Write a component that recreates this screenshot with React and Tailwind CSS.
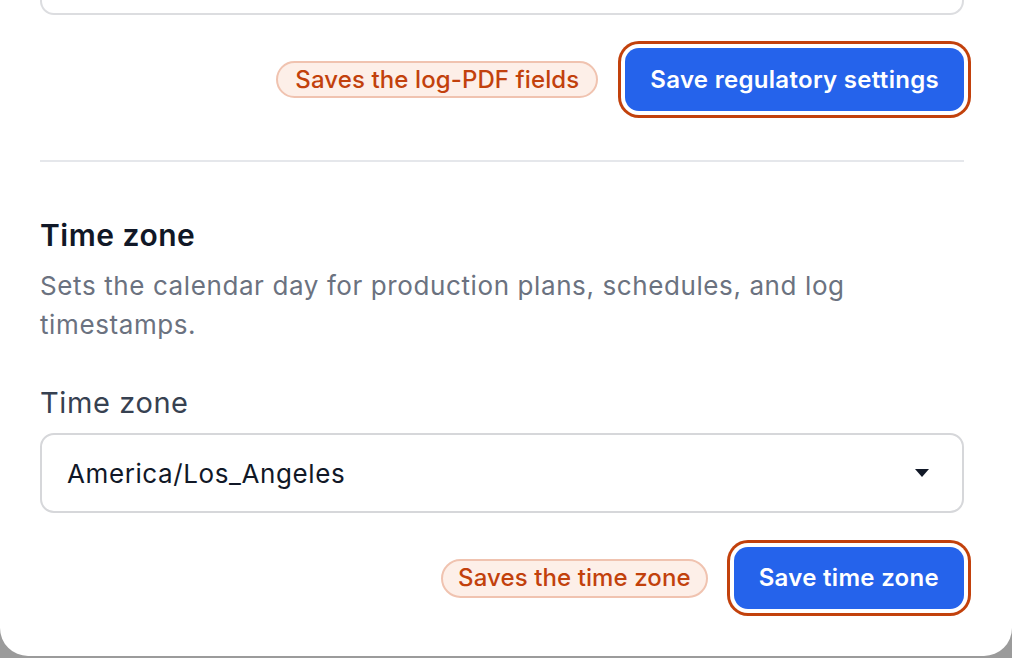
export default function App() {
  return (
    <div
      className="h-[658px] w-[1012px] overflow-hidden bg-[#9b9b9b]"
      style={{ fontFamily: 'Inter, "Noto Sans", sans-serif' }}
    >
      <div className="h-[656px] w-[1012px] rounded-b-[28px] bg-white pl-[40px] pr-[48px]">
        {/* bottom of the field above */}
        <div className="h-[15px] rounded-b-[14px] border-2 border-t-0 border-[#dcdde0]" />

        {/* regulatory save row */}
        <div className="mt-[33px] flex items-center justify-end gap-[27px]">
          <span className="flex h-[37px] items-center rounded-full border-2 border-[#f0c3b0] bg-[#fdefe8] px-[17px] text-[24px] font-medium tracking-[0.1px] text-[#c2410c]">
            Saves the log-PDF fields
          </span>
          <button className="h-[63px] rounded-[14px] bg-[#2563eb] px-[25px] text-[24px] font-semibold tracking-[0.3px] text-white ring-[3px] ring-[#c2410c] ring-offset-[4px] ring-offset-white">
            Save regulatory settings
          </button>
        </div>

        <div className="mt-[49px] h-[2px] bg-[#e5e7eb]" />

        {/* time zone section */}
        <h2 className="mt-[55px] text-[30px] font-semibold leading-[36px] tracking-[0.5px] text-[#111827]">
          Time zone
        </h2>
        <p className="mt-[13px] text-[26px] leading-[39px] tracking-[0.6px] text-[#6b7280]">
          Sets the calendar day for production plans, schedules, and log
          <br />
          timestamps.
        </p>

        <label className="mt-[41px] block text-[29px] leading-[36px] tracking-[0.6px] text-[#374151]">
          Time zone
        </label>
        <div className="mt-[12px] flex h-[80px] items-center justify-between rounded-[14px] border-2 border-[#d6d7da] pl-[25px] pr-[32px]">
          <span className="text-[26px] tracking-[0.6px] text-[#111827]">America/Los_Angeles</span>
          <svg width="16" height="10" viewBox="0 0 16 10">
            <path d="M1 1 L15 1 L8 9 Z" fill="#111827" />
          </svg>
        </div>

        {/* time zone save row */}
        <div className="mt-[34px] flex items-center justify-end gap-[26px]">
          <span className="flex h-[39px] items-center rounded-full border-2 border-[#f0c3b0] bg-[#fdefe8] px-[15px] text-[24px] font-medium tracking-[0.1px] text-[#c2410c]">
            Saves the time zone
          </span>
          <button className="h-[62px] rounded-[14px] bg-[#2563eb] px-[25px] text-[24px] font-semibold tracking-[0.3px] text-white ring-[3px] ring-[#c2410c] ring-offset-[4px] ring-offset-white">
            Save time zone
          </button>
        </div>
      </div>
    </div>
  );
}
